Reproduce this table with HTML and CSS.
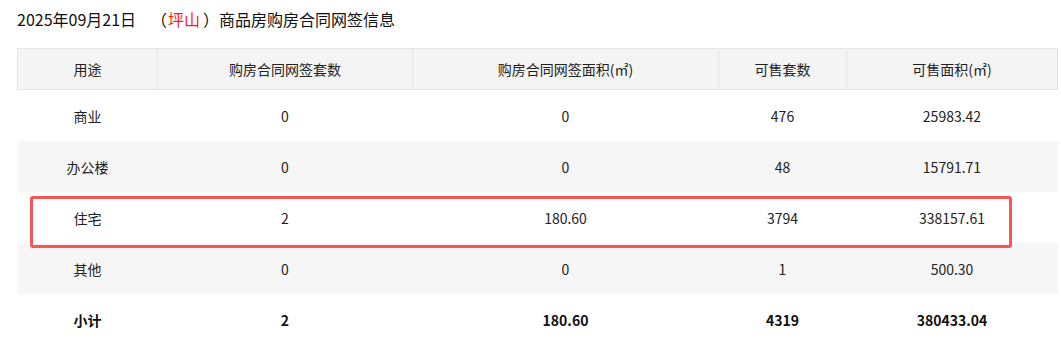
FILE: index.html
```html
<!DOCTYPE html>
<html lang="zh-CN">
<head>
<meta charset="utf-8">
<title>商品房购房合同网签信息</title>
<link rel="stylesheet" href="styles.css">
</head>
<body>
<div class="page">
  <h1 class="title">2025年09月21日<span class="gap"></span>（<span class="district">坪山</span>）商品房购房合同网签信息</h1>
  <div class="table-wrap">
    <table class="data">
      <colgroup>
        <col class="c1"><col class="c2"><col class="c3"><col class="c4"><col class="c5">
      </colgroup>
      <thead>
        <tr>
          <th>用途</th>
          <th>购房合同网签套数</th>
          <th>购房合同网签面积(㎡)</th>
          <th>可售套数</th>
          <th>可售面积(㎡)</th>
        </tr>
      </thead>
      <tbody>
        <tr><td>商业</td><td>0</td><td>0</td><td>476</td><td>25983.42</td></tr>
        <tr class="alt"><td>办公楼</td><td>0</td><td>0</td><td>48</td><td>15791.71</td></tr>
        <tr><td>住宅</td><td>2</td><td>180.60</td><td>3794</td><td>338157.61</td></tr>
        <tr class="alt"><td>其他</td><td>0</td><td>0</td><td>1</td><td>500.30</td></tr>
        <tr class="total"><td>小计</td><td>2</td><td>180.60</td><td>4319</td><td>380433.04</td></tr>
      </tbody>
    </table>
    <div class="highlight"></div>
  </div>
</div>
</body>
</html>
```

FILE: styles.css
```css
html, body {
  margin: 0;
  padding: 0;
  background: #ffffff;
}
body {
  font-family: "Noto Sans CJK SC", "Noto Sans", sans-serif;
  color: #222222;
}
.page {
  padding: 7px 0 0 17px;
}
.title {
  margin: 0;
  font-size: 16px;
  font-weight: normal;
  line-height: 24px;
  color: #111111;
}
.gap {
  display: inline-block;
  width: 15px;
}
.district {
  color: #ff1a1a;
  padding: 0 3px 0 1px;
}
.table-wrap {
  position: relative;
  margin-top: 17px;
  width: 1040px;
}
.data {
  width: 1040px;
  border-collapse: collapse;
  table-layout: fixed;
  font-size: 14px;
}
.c1 { width: 140px; }
.c2 { width: 255px; }
.c3 { width: 306px; }
.c4 { width: 128px; }
.c5 { width: 211px; }
.data th {
  height: 40px;
  padding: 0;
  background: #f4f4f4;
  border: 1px solid #e4e4e4;
  font-weight: normal;
  text-align: center;
  color: #222222;
}
.data td {
  height: 51px;
  padding: 0;
  text-align: center;
}
.data tr.alt td {
  background: #f6f6f6;
}
.data tr.total td {
  font-weight: bold;
  color: #111111;
}
.highlight {
  position: absolute;
  left: 13px;
  top: 148px;
  width: 976px;
  height: 46px;
  border: 3px solid #f55656;
  border-radius: 3px;
}
```
